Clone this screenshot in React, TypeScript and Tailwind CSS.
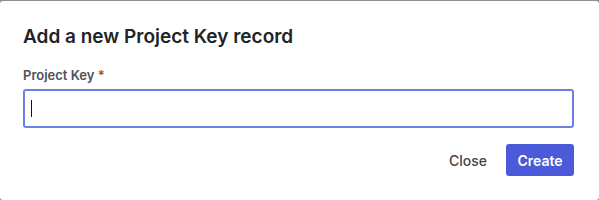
export default function App() {
  return (
    <div
      className="w-[599px] h-[200px] bg-[#8d8c93] pt-px"
      style={{ fontFamily: "Inter, 'Noto Sans', sans-serif" }}
    >
      <div className="h-[199px] bg-white rounded-[3px] pl-[23px] pr-[25px] pt-[23px]">
        <h2 className="text-[19px] leading-[26px] font-semibold text-[#222326]">
          Add a new Project Key record
        </h2>
        <label className="block mt-[17px] text-[13px] leading-[16px] font-semibold text-[#505159]">
          Project Key <span className="text-[#c0392b]">*</span>
        </label>
        <div className="mt-[6px] h-[39px] border-2 border-[#6b80e6] rounded-[3px] flex items-center pl-[6px]">
          <div className="w-px h-[17px] bg-[#111]" />
        </div>
        <div className="flex justify-end items-center gap-[6px] mt-[16px]">
          <button className="h-8 px-[13px] text-[14px] font-medium text-[#444549]">Close</button>
          <button className="h-8 w-[68px] rounded-[3px] bg-[#4a5ad9] text-[14px] font-semibold text-white">
            Create
          </button>
        </div>
      </div>
    </div>
  );
}
